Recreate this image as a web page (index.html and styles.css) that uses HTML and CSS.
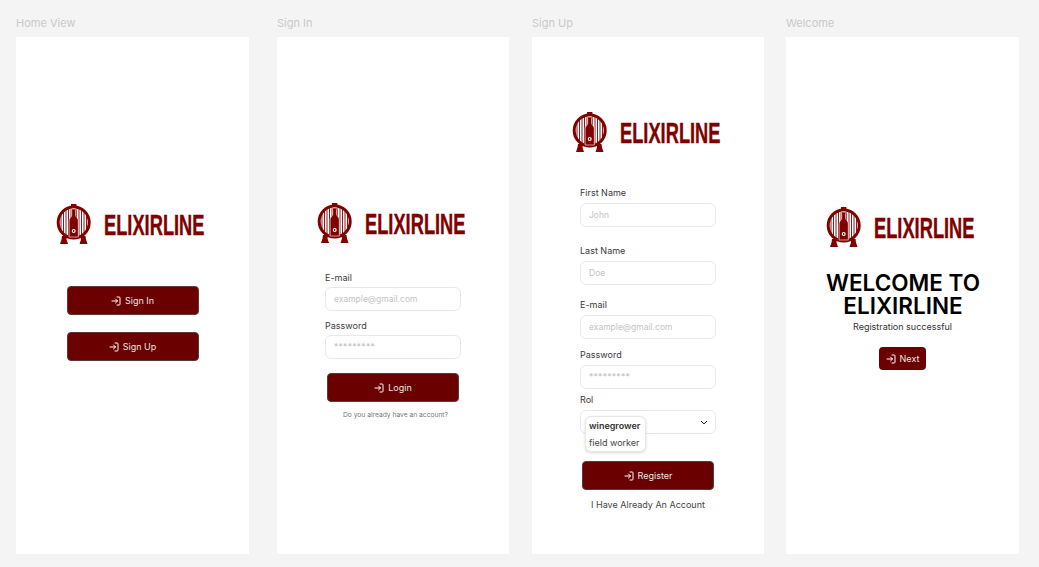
FILE: index.html
```html
<!DOCTYPE html>
<html lang="en">

<head>
  <meta charset="UTF-8">
  <meta name="viewport" content="width=device-width, initial-scale=1.0">
  <title>Elixirline screens</title>
  <link rel="stylesheet" href="styles.css">
</head>

<body>

  <svg class="defs" width="0" height="0">
    <symbol id="barrel" viewBox="0 0 36 42">
      <rect x="16" y="0" width="5.400" height="2.500" fill="#800000" />
      <path d="M7 32h5l-.5 3.500 1.500 4.500H5l1.500-4.500zM25.500 32h5l.5 3.500 1.500 4.500H24.500l1.500-4.500z" fill="#800000" />
      <circle cx="18.700" cy="18.500" r="15.500" fill="#fff" stroke="#800000" stroke-width="3" />
      <path d="M6 11v15M8.500 8v21M11 6v25M13.500 5v28M16 4.500v29M21.400 4.500v29M24 5v28M26.500 6v25M29 8v21M31.500 11v15" stroke="#800000" stroke-width=".9" />
      <path d="M16.300 5h4.800v1.500h-.4v4.800c0 2 2.600 2.600 2.600 5.500V33h-9.200V16.800c0-2.900 2.600-3.500 2.600-5.500V6.500h-.4z" fill="#800000" stroke="#fff" stroke-width=".6" />
      <circle cx="18.700" cy="27" r="2" fill="#fff" />
      <rect x="18.100" y="26" width="1.200" height="2" fill="#800000" />
    </symbol>
    <symbol id="enter" viewBox="0 0 10 10">
      <path d="M6 1h2.200a.8.800 0 0 1 .8.800v6.400a.8.800 0 0 1-.8.800H6M1 5h5.500M4.500 3l2 2-2 2" fill="none" stroke="#fff" stroke-width="1" stroke-linecap="round" stroke-linejoin="round" />
    </symbol>
  </svg>

  <main class="board">

    <section class="screen">
      <h3 class="screen-title">Home View</h3>
      <div class="frame frame-home">
        <div class="logo">
          <svg class="logo-icon"><use href="#barrel" /></svg>
          <span class="logo-text">ELIXIRLINE</span>
        </div>
        <a class="btn btn-wide first-btn"><svg class="btn-icon"><use href="#enter" /></svg>Sign In</a>
        <a class="btn btn-wide second-btn"><svg class="btn-icon"><use href="#enter" /></svg>Sign Up</a>
      </div>
    </section>

    <section class="screen">
      <h3 class="screen-title">Sign In</h3>
      <div class="frame frame-signin">
        <div class="logo">
          <svg class="logo-icon"><use href="#barrel" /></svg>
          <span class="logo-text">ELIXIRLINE</span>
        </div>
        <form class="form form-signin">
          <label class="field-label">E-mail</label>
          <div class="input">example@gmail.com</div>
          <label class="field-label gap-s">Password</label>
          <div class="input input-stars">*********</div>
        </form>
        <a class="btn btn-wide login-btn"><svg class="btn-icon"><use href="#enter" /></svg>Login</a>
        <p class="hint">Do you already have an account?</p>
      </div>
    </section>

    <section class="screen">
      <h3 class="screen-title">Sign Up</h3>
      <div class="frame frame-signup">
        <div class="logo">
          <svg class="logo-icon"><use href="#barrel" /></svg>
          <span class="logo-text">ELIXIRLINE</span>
        </div>
        <form class="form form-signup">
          <label class="field-label">First Name</label>
          <div class="input">John</div>
          <label class="field-label gap-l">Last Name</label>
          <div class="input">Doe</div>
          <label class="field-label gap-m">E-mail</label>
          <div class="input">example@gmail.com</div>
          <label class="field-label gap-n">Password</label>
          <div class="input input-stars">*********</div>
          <label class="field-label gap-r">Rol</label>
          <div class="input select">
            <svg class="chevron" viewBox="0 0 8 5"><path d="M1 1l3 3 3-3" fill="none" stroke="#222" stroke-width="1" /></svg>
            <ul class="menu">
              <li class="menu-active">winegrower</li>
              <li>field worker</li>
            </ul>
          </div>
        </form>
        <a class="btn btn-wide register-btn"><svg class="btn-icon"><use href="#enter" /></svg>Register</a>
        <p class="already">I Have Already An Account</p>
      </div>
    </section>

    <section class="screen">
      <h3 class="screen-title">Welcome</h3>
      <div class="frame frame-welcome">
        <div class="logo">
          <svg class="logo-icon"><use href="#barrel" /></svg>
          <span class="logo-text">ELIXIRLINE</span>
        </div>
        <h1 class="welcome-title">WELCOME TO ELIXIRLINE</h1>
        <p class="welcome-sub">Registration successful</p>
        <a class="btn next-btn"><svg class="btn-icon"><use href="#enter" /></svg>Next</a>
      </div>
    </section>

  </main>

</body>

</html>
```

FILE: styles.css
```css
* {
  box-sizing: border-box;
}

body {
  margin: 0;
  background-color: #f4f4f4;
  font-family: Inter, "Liberation Sans", sans-serif;
  color: #3a3a3a;
}

.defs {
  display: block;
  height: 0;
}

.board {
  display: flex;
  height: 567px;
  padding: 17px 0 0 16px;
  overflow: hidden;
}

.screen {
  width: 233px;
  margin-right: 28px;
}

.screen:nth-child(2) {
  width: 232px;
  margin-right: 23px;
}

.screen:nth-child(3) {
  width: 232px;
  margin-right: 22px;
}

.screen:nth-child(4) {
  margin-right: 0;
}

.screen-title {
  height: 20px;
  margin: 0;
  font-size: 11px;
  font-weight: 400;
  line-height: 13px;
  color: #c9c9c9;
}

.frame {
  display: flex;
  flex-direction: column;
  height: 517px;
  background-color: #fff;
}

.frame-home {
  padding-top: 167px;
}

.frame-signin {
  padding-top: 166px;
}

.frame-signup {
  padding-top: 75px;
}

.frame-welcome {
  padding-top: 170px;
}

/* logo */
.logo {
  display: flex;
  align-items: center;
  height: 42px;
  padding-left: 39px;
  flex-shrink: 0;
}

.logo-icon {
  flex: 0 0 36px;
  width: 36px;
  height: 42px;
}

.logo-text {
  flex: 0 0 100px;
  width: 100px;
  margin-left: 13px;
  font-family: "Liberation Sans", sans-serif;
  font-size: 29px;
  font-weight: 700;
  line-height: 42px;
  color: #800000;
  white-space: nowrap;
  transform: scaleX(.63);
  transform-origin: left center;
  -webkit-text-stroke: .4px #800000;
}

/* buttons */
.btn {
  display: flex;
  align-items: center;
  justify-content: center;
  gap: 4px;
  height: 29px;
  background-color: #6a0000;
  border: 1px solid #5a3a3a;
  border-radius: 4px;
  color: #f0e4e4;
  font-size: 9px;
}

.btn-wide {
  width: 132px;
}

.btn-icon {
  width: 10px;
  height: 10px;
}

.first-btn {
  margin: 40px 0 0 50.500px;
}

.second-btn {
  margin: 17px 0 0 50.500px;
}

.login-btn {
  margin: 14px 0 0 50px;
}

.register-btn {
  margin: 27px 0 0 50px;
}

.next-btn {
  align-self: center;
  width: 47px;
  height: 23px;
  margin: 14px 0 0 0;
  border: 0;
  border-radius: 4px;
}

/* forms */
.form {
  display: flex;
  flex-direction: column;
  width: 136px;
}

.form-signin {
  margin: 27px 0 0 48px;
}

.form-signup {
  margin: 33px 0 0 48px;
}

.field-label {
  height: 12px;
  margin-bottom: 3px;
  font-size: 9px;
  font-weight: 400;
  line-height: 12px;
}

.form-signup .field-label {
  margin-bottom: 4px;
}

.gap-s {
  margin-top: 9px;
}

.gap-l {
  margin-top: 18px;
}

.gap-m {
  margin-top: 14px;
}

.gap-n {
  margin-top: 10px;
}

.gap-r {
  margin-top: 5px;
}

.input {
  display: flex;
  align-items: center;
  height: 24px;
  padding: 0 8px;
  border: 1px solid #e8e8e8;
  border-radius: 6px;
  background-color: #fff;
  font-size: 8.500px;
  color: #c4c4c4;
}

.input-stars {
  letter-spacing: .3px;
}

.select {
  position: relative;
  justify-content: flex-end;
}

.chevron {
  width: 8px;
  height: 5px;
  margin-right: -1px;
}

.menu {
  position: absolute;
  top: 5px;
  left: 4px;
  width: 61px;
  margin: 0;
  padding: 0 3px;
  list-style: none;
  background-color: #fff;
  border: 1px solid #e8e8e8;
  border-radius: 6px;
  box-shadow: 0 1px 3px rgba(0, 0, 0, .15);
  font-size: 9px;
  line-height: 17px;
  color: #444;
}

.menu-active {
  font-weight: 600;
  color: #333;
}

.hint {
  margin: 8px 0 0 0;
  padding-left: 5px;
  font-size: 6.700px;
  line-height: 10px;
  color: #777;
  text-align: center;
}

.already {
  margin: 9px 0 0 0;
  font-size: 9px;
  line-height: 12px;
  color: #444;
  text-align: center;
}

/* welcome */
.welcome-title {
  width: 170px;
  margin: 22px 0 0 32px;
  font-size: 22.500px;
  font-weight: 600;
  line-height: 23px;
  color: #000;
  text-align: center;
}

.welcome-sub {
  margin: 4px 0 0 0;
  font-size: 9px;
  line-height: 12px;
  color: #333;
  text-align: center;
}
```
